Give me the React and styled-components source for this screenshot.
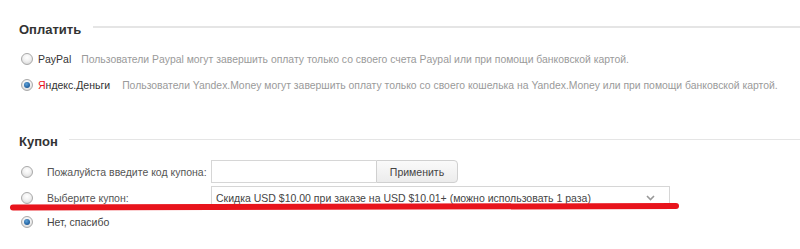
import React from 'react';
import styled, { createGlobalStyle } from 'styled-components';

const Global = createGlobalStyle`
  body {
    margin: 0;
    background: #fff;
    font-family: "Liberation Sans", Arial, sans-serif;
  }
`;

const Page = styled.div`
  position: relative;
  width: 800px;
  height: 249px;
  overflow: hidden;
  padding: 20px 0 0 19px;
  box-sizing: border-box;
`;

const Section = styled.section`
  margin-bottom: ${p => p.$gap || 0}px;
`;

const Title = styled.div`
  display: flex;
  align-items: center;
  height: 18px;
  font-size: 13px;
  font-weight: 700;
  color: #333;
  &::after {
    content: '';
    flex: 1;
    margin-left: ${p => p.$lineGap}px;
    height: ${p => p.$line}px;
    background: #e5e5e5;
    margin-top: -4px;
  }
`;

const Options = styled.div`
  display: flex;
  flex-direction: column;
  gap: ${p => p.$gap}px;
  margin-top: ${p => p.$top}px;
  padding-left: 2px;
`;

const Row = styled.label`
  display: flex;
  align-items: center;
  height: ${p => p.$h || 14}px;
  font-size: 10.5px;
  color: #444;
  white-space: nowrap;
`;

const Radio = styled.span`
  width: 12px;
  height: 12px;
  border-radius: 50%;
  box-sizing: border-box;
  border: 1px solid #a9a9a9;
  background: radial-gradient(circle at 50% 35%, #fff 0%, #f1f1f1 45%, #cfcfcf 100%);
  flex: none;
  position: relative;
  margin-right: ${p => p.$gap}px;
  &::after {
    content: '';
    display: ${p => (p.$on ? 'block' : 'none')};
    position: absolute;
    left: 2px;
    top: 2px;
    width: 6px;
    height: 6px;
    border-radius: 50%;
    background: radial-gradient(circle at 40% 35%, #5ea2d8 0%, #1f5d9c 70%, #163e6e 100%);
  }
`;

const Name = styled.span`
  font-size: 10.5px;
  color: #333;
  margin-right: ${p => p.$gap}px;
`;

const Red = styled.span`
  color: #e8141c;
`;

const Note = styled.span`
  font-size: 10.4px;
  color: #9a9a9a;
`;

const Label = styled.span`
  width: ${p => p.$w}px;
  flex: none;
  color: #555;
`;

const Field = styled.input`
  width: 165px;
  height: 23px;
  box-sizing: border-box;
  border: 1px solid #d6d6d6;
  border-right: none;
  margin: 0;
  padding: 0 5px;
  outline: none;
`;

const Button = styled.button`
  width: 82px;
  height: 23px;
  box-sizing: border-box;
  border: 1px solid #d0d0d0;
  border-radius: 0 4px 4px 0;
  background: linear-gradient(#fafafa, #ececec);
  font-family: inherit;
  font-size: 10.5px;
  color: #444;
  margin: 0;
  padding: 0;
`;

const Select = styled.div`
  width: 459px;
  height: 23px;
  box-sizing: border-box;
  border: 1px solid #d6d6d6;
  display: flex;
  align-items: center;
  justify-content: space-between;
  padding: 0 14px 0 4px;
  font-size: 10.5px;
  color: #444;
`;

const Chevron = styled.svg`
  width: 9px;
  height: 6px;
`;

const Strike = styled.svg`
  position: absolute;
  left: 0;
  top: 0;
  pointer-events: none;
`;

export default function App() {
  return (
    <>
      <Global />
      <Page>
        <Section $gap={40}>
          <Title $lineGap={12} $line={2}>Оплатить</Title>
          <Options $gap={12} $top={14}>
            <Row>
              <Radio $gap={5} />
              <Name $gap={10}>PayPal</Name>
              <Note>Пользователи Paypal могут завершить оплату только со своего счета Paypal или при помощи банковской картой.</Note>
            </Row>
            <Row>
              <Radio $gap={5} $on />
              <Name $gap={12}><Red>Я</Red>ндекс.Деньги</Name>
              <Note>Пользователи Yandex.Money могут завершить оплату только со своего кошелька на Yandex.Money или при помощи банковской картой.</Note>
            </Row>
          </Options>
        </Section>
        <Section>
          <Title $lineGap={11} $line={1}>Купон</Title>
          <Options $gap={3} $top={10}>
            <Row $h={23}>
              <Radio $gap={14} />
              <Label $w={164}>Пожалуйста введите код купона:</Label>
              <Field />
              <Button>Применить</Button>
            </Row>
            <Row $h={23}>
              <Radio $gap={14} />
              <Label $w={164}>Выберите купон:</Label>
              <Select>
                <span>Скидка USD $10.00 при заказе на USD $10.01+ (можно использовать 1 раза)</span>
                <Chevron viewBox="0 0 9 6">
                  <path d="M1 1 L4.5 4.5 L8 1" fill="none" stroke="#999" strokeWidth="1.6" />
                </Chevron>
              </Select>
            </Row>
            <Row $h={20}>
              <Radio $gap={14} $on />
              <span>Нет, спасибо</span>
            </Row>
          </Options>
        </Section>
        <Strike width="800" height="249">
          <path d="M13 207.5 Q340 207 676 206" stroke="#e8141c" strokeWidth="6" strokeLinecap="round" fill="none" />
        </Strike>
      </Page>
    </>
  );
}
